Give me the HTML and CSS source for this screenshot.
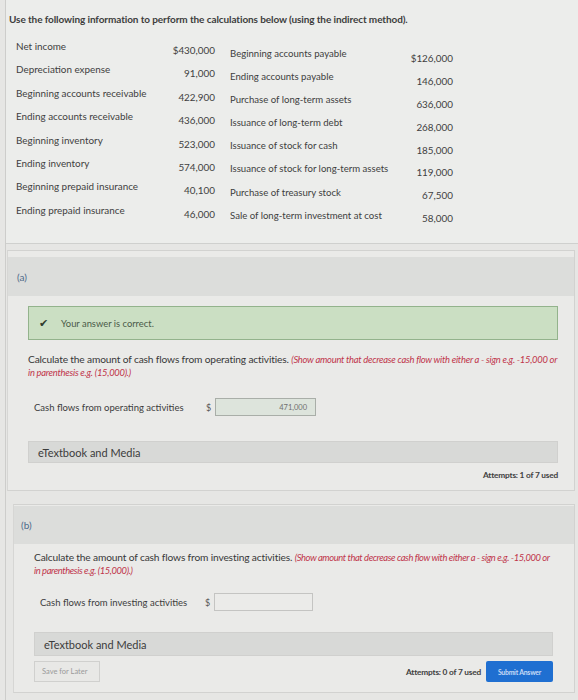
FILE: index.html
```html
<!DOCTYPE html>
<html lang="en">
<head>
<meta charset="utf-8">
<title>Cash flows</title>
<link rel="stylesheet" href="styles.css">
</head>
<body>
<div class="page">
  <section class="intro">
    <p class="lead">Use the following information to perform the calculations below (using the indirect method).</p>
    <div class="data">
      <ul class="col c1">
        <li>Net income</li>
        <li>Depreciation expense</li>
        <li>Beginning accounts receivable</li>
        <li>Ending accounts receivable</li>
        <li>Beginning inventory</li>
        <li>Ending inventory</li>
        <li>Beginning prepaid insurance</li>
        <li>Ending prepaid insurance</li>
      </ul>
      <ul class="col c2 num">
        <li>$430,000</li>
        <li>91,000</li>
        <li>422,900</li>
        <li>436,000</li>
        <li>523,000</li>
        <li>574,000</li>
        <li>40,100</li>
        <li>46,000</li>
      </ul>
      <ul class="col c3">
        <li>Beginning accounts payable</li>
        <li>Ending accounts payable</li>
        <li>Purchase of long-term assets</li>
        <li>Issuance of long-term debt</li>
        <li>Issuance of stock for cash</li>
        <li>Issuance of stock for long-term assets</li>
        <li>Purchase of treasury stock</li>
        <li>Sale of long-term investment at cost</li>
      </ul>
      <ul class="col c4 num">
        <li>$126,000</li>
        <li>146,000</li>
        <li>636,000</li>
        <li>268,000</li>
        <li>185,000</li>
        <li>119,000</li>
        <li>67,500</li>
        <li>58,000</li>
      </ul>
    </div>
  </section>

  <section class="part part-a">
    <div class="part-head">(a)</div>
    <div class="part-body">
      <div class="correct"><span class="check">&#10004;</span>Your answer is correct.</div>
      <p class="prompt">Calculate the amount of cash flows from operating activities. <em class="hint">(Show amount that decrease cash flow with either a - sign e.g. -15,000 or in parenthesis e.g. (15,000).)</em></p>
      <div class="answer-row">
        <span class="answer-label">Cash flows from operating activities</span>
        <span class="cur">$</span>
        <span class="field filled">471,000</span>
      </div>
      <div class="media">eTextbook and Media</div>
      <div class="footer-row">
        <span class="attempts">Attempts: 1 of 7 used</span>
      </div>
    </div>
  </section>

  <section class="part part-b">
    <div class="part-head">(b)</div>
    <div class="part-body">
      <p class="prompt">Calculate the amount of cash flows from investing activities. <em class="hint">(Show amount that decrease cash flow with either a - sign e.g. -15,000 or in parenthesis e.g. (15,000).)</em></p>
      <div class="answer-row">
        <span class="answer-label">Cash flows from investing activities</span>
        <span class="cur">$</span>
        <span class="field empty"></span>
      </div>
      <div class="media">eTextbook and Media</div>
      <div class="footer-row split">
        <span class="btn-save">Save for Later</span>
        <div class="submit-group">
          <span class="attempts">Attempts: 0 of 7 used</span>
          <span class="btn-submit">Submit Answer</span>
        </div>
      </div>
    </div>
  </section>
</div>
</body>
</html>
```

FILE: styles.css
```css
* { box-sizing: border-box; }

html, body {
  margin: 0;
  padding: 0;
}

body {
  background: #e6e6e4;
  font-family: Lato, "Open Sans", "Liberation Sans", sans-serif;
  color: #3a3a3a;
  width: 578px;
  height: 700px;
  overflow: hidden;
}

.page {
  margin-left: 5px;
  border-left: 1px solid #cdcdcb;
  height: 700px;
}

/* ---------- intro / data table ---------- */
.intro {
  height: 244px;
  background: #ecedeb;
  border-bottom: 1px solid #cfd0ce;
  padding: 12px 0 0 3px;
}

.lead {
  margin: 0;
  font-size: 10px;
  line-height: 14px;
  font-weight: 700;
  color: #3d3d3d;
  letter-spacing: -0.1px;
}

.data {
  display: flex;
  margin-top: 13px;
  padding-left: 7px;
  font-size: 9.9px;
  color: #404040;
}

.col {
  list-style: none;
  margin: 0;
  padding: 0;
}

.col li {
  height: 23.4px;
  line-height: 14px;
  white-space: nowrap;
}

.num { text-align: right; }

.c1 { width: 140px; }
.c2 { width: 59px; padding-top: 4px; }
.c3 { width: 164px; margin-left: 15px; padding-top: 8px; font-size: 9.6px; }
.c3 li { height: 23.1px; }
.c4 { width: 59px; padding-top: 12px; }
.c4 li { height: 22.9px; }

/* ---------- parts ---------- */
.part {
  background: #eaeae8;
  border: 1px solid #d2d2d0;
  border-left-color: #d6d6d4;
  margin-right: 3px;
}

.part-a {
  margin-top: 6px;
  margin-left: 1px;
  height: 241px;
  padding-top: 6px;
}

.part-b {
  margin-top: 13px;
  margin-left: 7px;
  height: 189px;
  padding-top: 1px;
}

.part-head {
  height: 39px;
  background: #dcdddb;
  display: flex;
  align-items: center;
  padding-left: 9px;
  font-size: 10px;
  color: #4f6a8a;
}

.part-b .part-head { height: 38px; padding-left: 7px; }

.part-body { padding: 0 16px 0 20px; }
.part-b .part-body { padding: 0 21px 0 20px; }

.correct {
  margin-top: 10px;
  height: 34px;
  background: #cbdfc3;
  border: 1px solid #93b38c;
  display: flex;
  align-items: center;
  padding-left: 10px;
  font-size: 9.4px;
  color: #4a5a48;
}

.check {
  font-size: 11px;
  color: #2f3d2e;
  width: 22px;
}

.prompt {
  margin: 13px 0 0;
  font-size: 10.2px;
  line-height: 13px;
  color: #383838;
  letter-spacing: -0.15px;
}

.part-b .prompt { margin-top: 7px; }

.hint {
  color: #c0344a;
  font-style: italic;
  font-size: 9.4px;
  letter-spacing: -0.25px;
}

.part-b .hint { letter-spacing: -0.4px; }

.answer-row {
  display: flex;
  align-items: center;
  margin-top: 19px;
  padding-left: 6px;
  height: 18px;
  font-size: 9.5px;
  color: #3c3c3c;
}

.part-b .answer-row { margin-top: 16px; }

.answer-label { width: 172px; }
.part-b .answer-label { width: 165px; }
.cur { width: 9px; font-size: 9px; color: #555; }

.field {
  height: 18px;
  width: 101px;
  border: 1px solid #a9aea8;
  font-size: 7.5px;
  display: flex;
  align-items: center;
  justify-content: flex-end;
  padding-right: 8px;
  color: #707070;
}

.filled { background: #dde4dc; }
.empty { background: #ebebe9; border-color: #c4c4c2; width: 99px; }

.media {
  margin-top: 25px;
  height: 22px;
  background: #d8d9d7;
  border: 1px solid #d0d0ce;
  display: flex;
  align-items: center;
  padding-left: 9px;
  font-size: 11px;
  color: #3c3c3c;
}

.part-b .media { margin-top: 21px; height: 24px; }

.footer-row {
  display: flex;
  justify-content: flex-end;
  margin-top: 7px;
}

.attempts {
  font-size: 8.3px;
  font-weight: 700;
  color: #404040;
  letter-spacing: -0.2px;
}

.footer-row.split {
  justify-content: space-between;
  align-items: center;
  margin-top: 5px;
}

.btn-save {
  width: 66px;
  height: 21px;
  border: 1px solid #d0d0ce;
  background: #e8e8e6;
  font-size: 7.5px;
  color: #9a9a9a;
  display: flex;
  align-items: center;
  padding-left: 7px;
}

.submit-group {
  display: flex;
  align-items: center;
  gap: 5px;
}

.btn-submit {
  height: 21px;
  width: 67px;
  background: #1f6fd1;
  border-radius: 2px;
  color: #c7dbf6;
  font-size: 6.8px;
  font-weight: 700;
  display: flex;
  align-items: center;
  justify-content: center;
  letter-spacing: -0.2px;
}
```
